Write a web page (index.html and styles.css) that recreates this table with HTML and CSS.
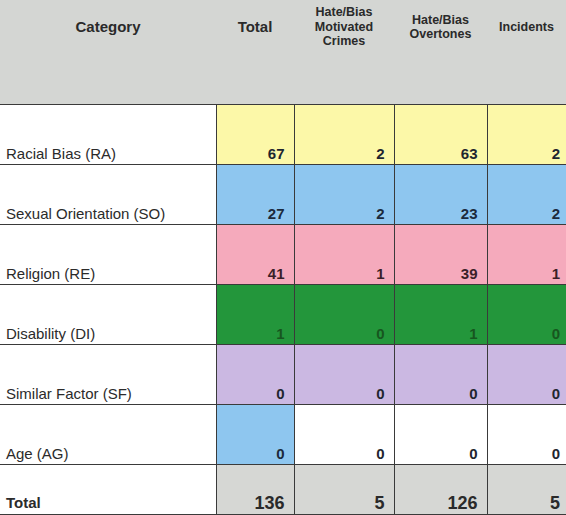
FILE: index.html
```html
<!DOCTYPE html>
<html>
<head>
<meta charset="utf-8">
<link rel="stylesheet" href="styles.css">
</head>
<body>
<table class="report">
  <colgroup>
    <col class="c-cat"><col class="c-total"><col class="c-mc"><col class="c-ov"><col class="c-inc">
  </colgroup>
  <thead>
    <tr class="head">
      <th><div class="hbox big">Category</div></th>
      <th><div class="hbox big">Total</div></th>
      <th><div class="hbox">Hate/Bias<br>Motivated<br>Crimes</div></th>
      <th><div class="hbox">Hate/Bias<br>Overtones</div></th>
      <th><div class="hbox">Incidents</div></th>
    </tr>
  </thead>
  <tbody>
    <tr class="row ra">
      <td class="label">Racial Bias (RA)</td>
      <td class="num">67</td><td class="num">2</td><td class="num">63</td><td class="num">2</td>
    </tr>
    <tr class="row so">
      <td class="label">Sexual Orientation (SO)</td>
      <td class="num">27</td><td class="num">2</td><td class="num">23</td><td class="num">2</td>
    </tr>
    <tr class="row re">
      <td class="label">Religion (RE)</td>
      <td class="num">41</td><td class="num">1</td><td class="num">39</td><td class="num">1</td>
    </tr>
    <tr class="row di">
      <td class="label">Disability (DI)</td>
      <td class="num">1</td><td class="num">0</td><td class="num">1</td><td class="num">0</td>
    </tr>
    <tr class="row sf">
      <td class="label">Similar Factor (SF)</td>
      <td class="num">0</td><td class="num">0</td><td class="num">0</td><td class="num">0</td>
    </tr>
    <tr class="row ag">
      <td class="label">Age (AG)</td>
      <td class="num first">0</td><td class="num">0</td><td class="num">0</td><td class="num">0</td>
    </tr>
    <tr class="row totalrow">
      <td class="label">Total</td>
      <td class="num">136</td><td class="num">5</td><td class="num">126</td><td class="num">5</td>
    </tr>
  </tbody>
</table>
</body>
</html>
```
FILE: styles.css
```css
html, body {
  margin: 0;
  padding: 0;
  background: #ffffff;
}
body {
  font-family: "Liberation Sans", Arial, sans-serif;
  color: #222;
}
.report {
  width: 566px;
  table-layout: fixed;
  border-collapse: collapse;
}
.c-cat { width: 216px; }
.c-total { width: 78px; }
.c-mc { width: 100px; }
.c-ov { width: 93px; }
.c-inc { width: 79px; }

.head th {
  background: #d4d6d3;
  height: 104px;
  padding: 0;
  vertical-align: top;
  border-bottom: 1px solid #3a3a3a;
  font-weight: bold;
}
.hbox {
  height: 54px;
  display: flex;
  align-items: center;
  justify-content: center;
  text-align: center;
  font-size: 12.5px;
  line-height: 14.5px;
  color: #2a2a2a;
}
.hbox.big {
  font-size: 15px;
}

.row td {
  height: 57px;
  padding: 0 9px 2px 6px;
  vertical-align: bottom;
  border-bottom: 1px solid #3a3a3a;
  line-height: 17px;
}
.row td + td {
  border-left: 1px solid #3a3a3a;
}
.label {
  font-size: 15px;
  color: #2b2b2b;
  background: #ffffff;
}
.num {
  text-align: right;
  font-size: 15px;
  font-weight: bold;
  color: #1f2630;
}
.row .num:last-child {
  padding-right: 6px;
}
.ra .num { background: #fcf8a8; }
.so .num { background: #8ec6ef; color: #1b2a3c; }
.re .num { background: #f5aabc; color: #3a1f28; }
.di .num { background: #23963b; color: #17561f; }
.sf .num { background: #cbb8e2; }
.ag .num { background: #ffffff; }
.ag .num.first { background: #8ec6ef; color: #1b2a3c; }

.totalrow td {
  height: 48px;
  padding-bottom: 1px;
  line-height: 20px;
}
.totalrow .label {
  font-weight: bold;
}
.totalrow .num {
  background: #d6d7d4;
  font-size: 18px;
  color: #2a2a2a;
}
```
